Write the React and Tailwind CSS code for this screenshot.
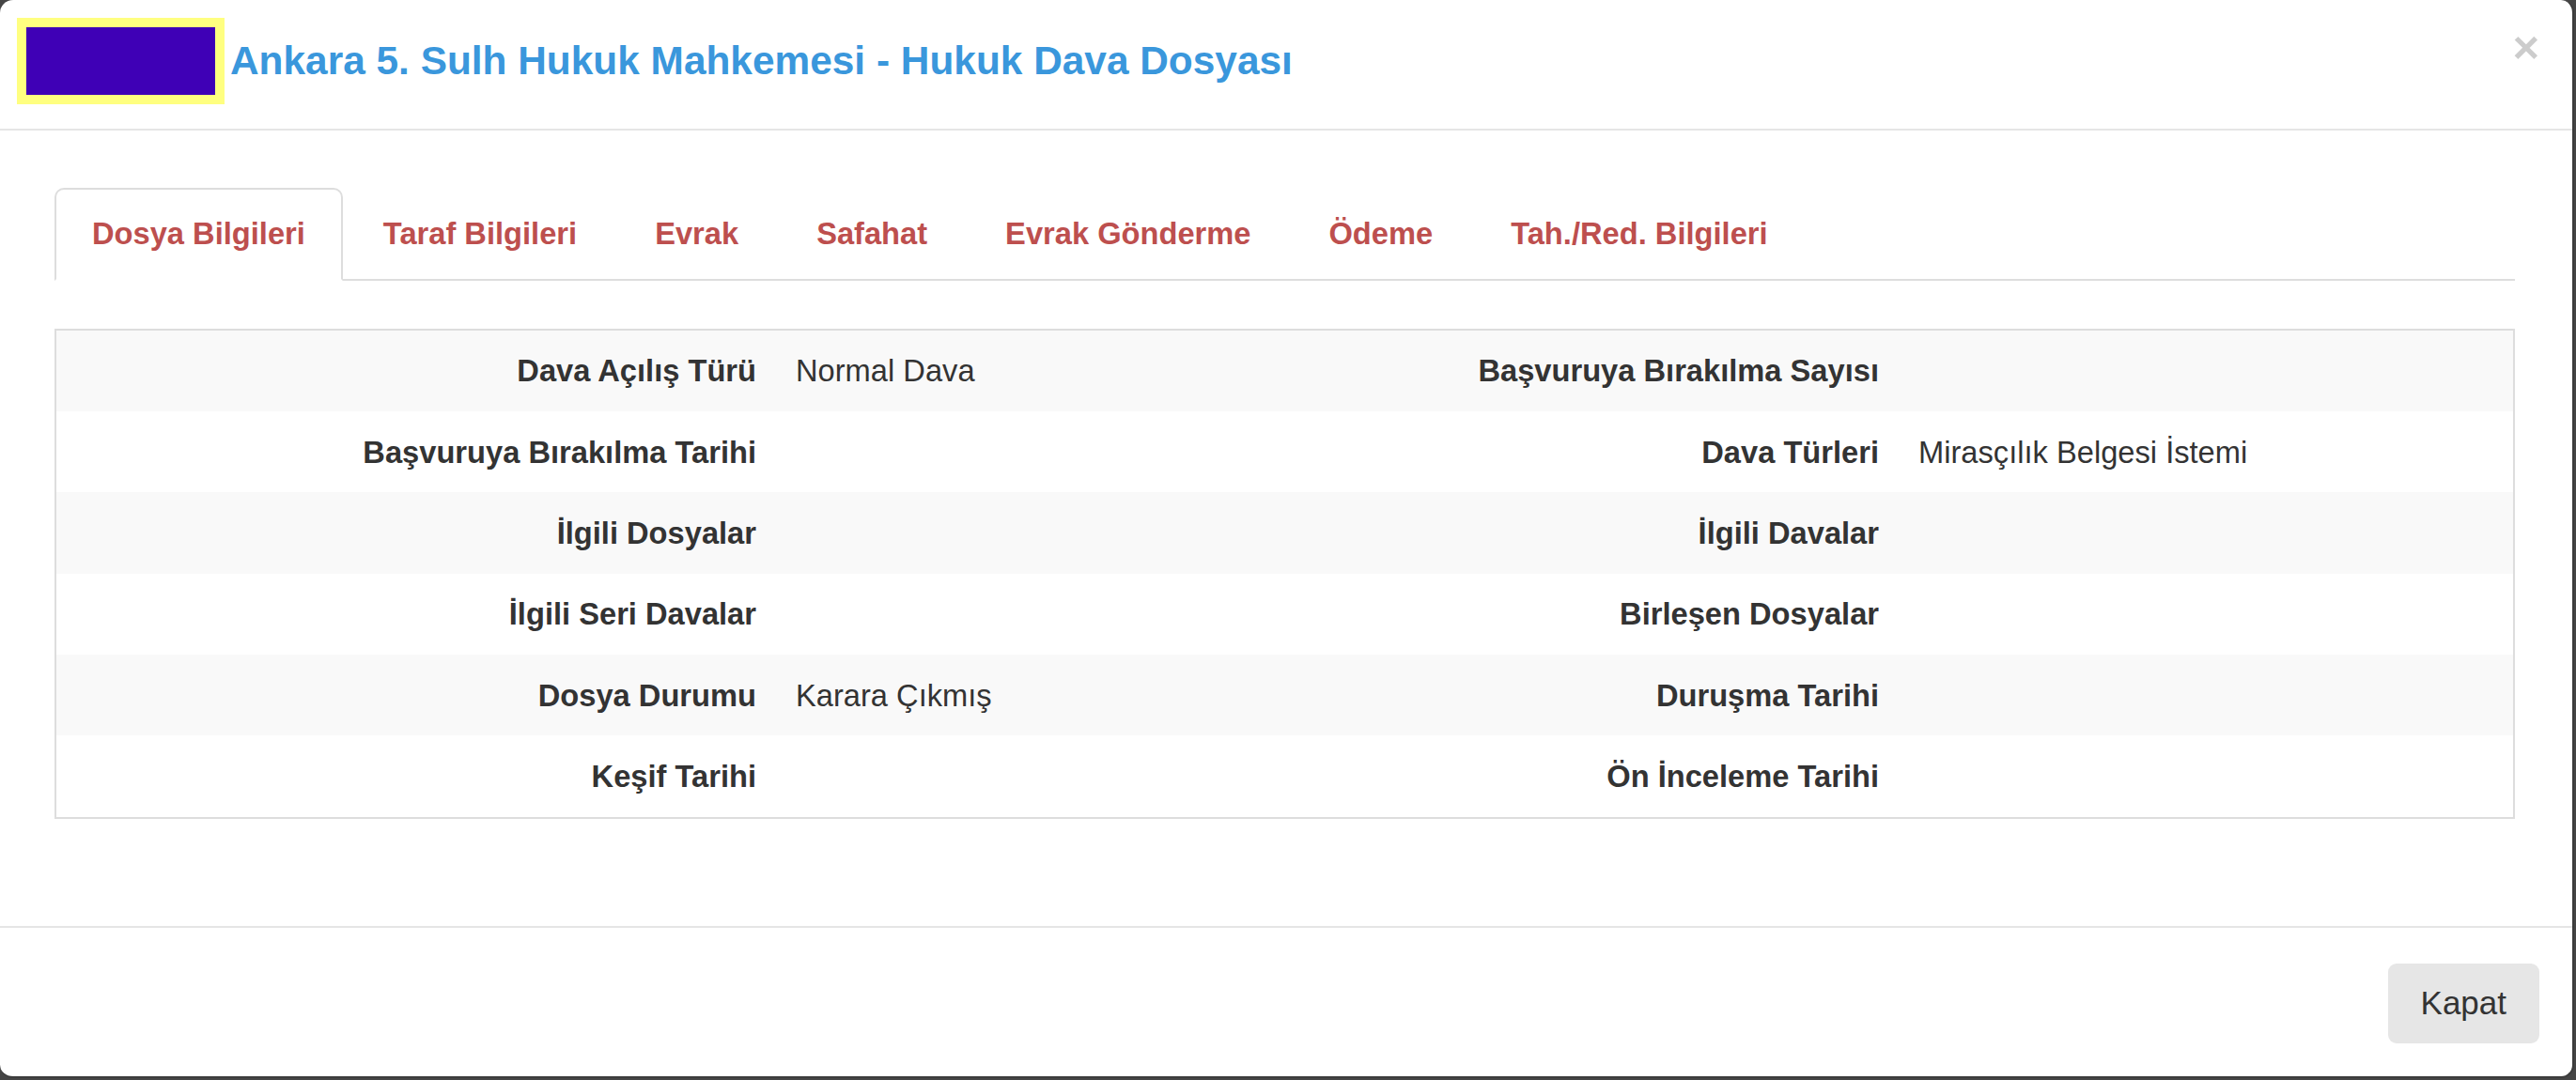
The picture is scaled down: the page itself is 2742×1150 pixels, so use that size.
import React from "react";

const tabs = [
    "Dosya Bilgileri",
    "Taraf Bilgileri",
    "Evrak",
    "Safahat",
    "Evrak Gönderme",
    "Ödeme",
    "Tah./Red. Bilgileri",
];

const rows = [
    ["Dava Açılış Türü", "Normal Dava", "Başvuruya Bırakılma Sayısı", ""],
    ["Başvuruya Bırakılma Tarihi", "", "Dava Türleri", "Mirasçılık Belgesi İstemi"],
    ["İlgili Dosyalar", "", "İlgili Davalar", ""],
    ["İlgili Seri Davalar", "", "Birleşen Dosyalar", ""],
    ["Dosya Durumu", "Karara Çıkmış", "Duruşma Tarihi", ""],
    ["Keşif Tarihi", "", "Ön İnceleme Tarihi", ""],
];

function App() {
    return (
        <div className="w-[2742px] h-[1150px] bg-[#454545] overflow-hidden font-['Liberation_Sans',Arial,sans-serif] text-[#333]">
            <div className="w-[2740px] h-[1148px] bg-white rounded-[14px] border-r-2 border-b-2 border-[#3c3c3c] flex flex-col">
                {/* header */}
                <div className="h-[139px] shrink-0 border-b-2 border-[#e5e5e5] flex items-start pt-[19px] pl-[18px] pr-[35px]">
                    <div className="flex items-center gap-[6px]">
                        <div className="p-[10px] bg-[#ffff80]">
                            <div className="w-[201px] h-[72px] bg-[#3f00b6]" />
                        </div>
                        <h4 className="text-[42.4px] leading-[60px] font-bold text-[#3a97dc]">
                            Ankara 5. Sulh Hukuk Mahkemesi - Hukuk Dava Dosyası
                        </h4>
                    </div>
                    <button className="ml-auto mt-[7px] text-[49px] leading-none font-bold text-black/20">
                        ×
                    </button>
                </div>

                {/* body */}
                <div className="flex-1 pt-[61px] pl-[58px] pr-[61px]">
                    <ul className="flex border-b-2 border-[#ddd]">
                        {tabs.map((tab, index) => (
                            <li key={index} className="-mb-[2px] mr-[3px]">
                                <a
                                    className={
                                        index === 0
                                            ? "block px-[38px] py-[24px] text-[32.67px] leading-[46.67px] font-bold text-[#bd4f4e] bg-white border-2 border-[#ddd] border-b-white rounded-t-[10px]"
                                            : "block px-[38px] py-[24px] text-[32.67px] leading-[46.67px] font-bold text-[#bd4f4e] border-2 border-transparent"
                                    }
                                >
                                    {tab}
                                </a>
                            </li>
                        ))}
                    </ul>

                    <div className="mt-[51px] border-2 border-[#ddd]">
                        {rows.map((row, idx) => (
                            <div
                                key={idx}
                                className={`grid grid-cols-[766px_425px_770px_654px] items-center h-[86.33px] text-[32.67px] ${
                                    idx % 2 === 0 ? "bg-[#f9f9f9]" : "bg-white"
                                }`}
                            >
                                <div className="text-right font-bold pr-[21px]">{row[0]}</div>
                                <div className="pl-[21px]">{row[1]}</div>
                                <div className="text-right font-bold pr-[21px]">{row[2]}</div>
                                <div className="pl-[21px]">{row[3]}</div>
                            </div>
                        ))}
                    </div>
                </div>

                {/* footer */}
                <div className="h-[160px] shrink-0 border-t-2 border-[#e5e5e5] flex justify-end items-start pt-[38px] pr-[35px]">
                    <button className="h-[85px] px-[35px] rounded-[9px] bg-[#e6e6e6] text-[35px] text-[#333]">
                        Kapat
                    </button>
                </div>
            </div>
        </div>
    );
}

export default App;
